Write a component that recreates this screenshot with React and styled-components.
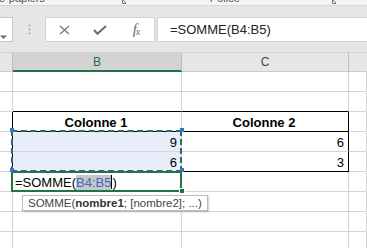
import React from 'react';
import styled, { createGlobalStyle } from 'styled-components';

const GlobalStyle = createGlobalStyle`
  html, body { margin: 0; padding: 0; background: #fff; }
  body { font-family: "Liberation Sans", Arial, sans-serif; overflow: hidden; }
`;

const COLS = '13px 169px 167px 1fr';

const Page = styled.div`
  width: 367px;
  height: 248px;
  overflow: hidden;
  display: flex;
  flex-direction: column;
  background: #fff;
`;

const RibbonEdge = styled.div`
  flex: none;
  height: 5px;
  overflow: hidden;
  display: flex;
  align-items: flex-start;
  background: #f4f4f4;
  border-bottom: 1px solid #d6d6d6;
`;

const RibbonLabel = styled.span`
  margin-top: -8px;
  margin-left: ${p => p.$left}px;
  font-size: 11px;
  line-height: 13px;
  color: #555;
  white-space: nowrap;
`;

const Launcher = styled.svg`
  flex: none;
  margin-left: ${p => p.$left}px;
`;

const FormulaArea = styled.div`
  flex: none;
  height: 46px;
  box-sizing: border-box;
  padding-top: 11px;
  display: flex;
  align-items: flex-start;
  background: #e6e6e6;
`;

const NameBox = styled.div`
  width: 13px;
  height: 25px;
  box-sizing: border-box;
  background: #fff;
  border: 1px solid #c6c6c6;
  border-left: none;
  padding-top: 8px;
`;

const Grip = styled.div`
  width: 32px;
  height: 25px;
  display: flex;
  align-items: center;
  justify-content: center;
`;

const ButtonBox = styled.div`
  width: 110px;
  height: 25px;
  box-sizing: border-box;
  background: #fff;
  border: 1px solid #d2d2d2;
  display: flex;
  align-items: center;
`;

const IconSlot = styled.div`
  width: 36px;
  display: flex;
  justify-content: center;
  align-items: center;
  color: #6a6a6a;
`;

const Fx = styled.span`
  font-family: "Liberation Serif", "Times New Roman", serif;
  font-style: italic;
  font-size: 15px;
  color: #6a6a6a;
  letter-spacing: -1px;
  sub { font-size: 10px; vertical-align: -1px; }
`;

const FormulaInput = styled.div`
  flex: 1;
  height: 25px;
  margin-left: 2px;
  box-sizing: border-box;
  background: #fff;
  border: 1px solid #d2d2d2;
  border-right: none;
  padding-left: 12px;
  display: flex;
  align-items: center;
  font-size: 13px;
  color: #222;
`;

const Sheet = styled.div`
  position: relative;
  flex: 1;
`;

const HeaderRow = styled.div`
  display: grid;
  grid-template-columns: ${COLS};
  border-top: 1px solid #d3d3d3;
`;

const HeaderCell = styled.div`
  height: 19px;
  box-sizing: border-box;
  display: flex;
  align-items: center;
  justify-content: center;
  font-size: 12px;
  background: ${p => (p.$active ? '#d3d3d3' : '#e6e6e6')};
  color: ${p => (p.$active ? '#1d6b40' : '#444')};
  border-right: 1px solid ${p => (p.$last ? 'transparent' : '#bdbdbd')};
  border-bottom: ${p => (p.$active ? '2px solid #217346' : '1px solid #c9c9c9')};
`;

const Grid = styled.div`
  display: grid;
  grid-template-columns: ${COLS};
  grid-auto-rows: 20px;
`;

const Cell = styled.div`
  box-sizing: border-box;
  display: flex;
  align-items: flex-end;
  justify-content: ${p => p.$align || 'flex-start'};
  padding: 0 4px 1px 2px;
  font-size: 13px;
  line-height: 15px;
  font-weight: ${p => (p.$bold ? 700 : 400)};
  color: #000;
  white-space: nowrap;
  overflow: visible;
  background: ${p => (p.$sel ? '#e8eef9' : '#fff')};
  border-right: 1px solid ${p => (p.$r ? '#000' : '#d4d4d4')};
  border-bottom: 1px solid ${p => (p.$b ? '#000' : '#d4d4d4')};
`;

const Ref = styled.span`
  color: #3a68c2;
  background: #c8c8c8;
`;

const Caret = styled.span`
  display: inline-block;
  width: 1px;
  height: 14px;
  background: #000;
  vertical-align: -2px;
`;

const ActiveFrame = styled.div`
  position: absolute;
  left: 11px;
  top: 119px;
  width: 171px;
  height: 21px;
  box-sizing: border-box;
  border: 2px solid #217346;
  pointer-events: none;
`;

const RangeFrame = styled.div`
  position: absolute;
  left: 11px;
  top: 78px;
  width: 171px;
  height: 42px;
  box-sizing: border-box;
  border: 2px dashed #2b6d5f;
  pointer-events: none;
`;

const Handle = styled.div`
  position: absolute;
  left: ${p => p.$x - 2}px;
  top: ${p => p.$y - 2}px;
  width: 4px;
  height: 4px;
  background: ${p => p.$color || '#3b6fca'};
  box-shadow: ${p => (p.$ring ? '0 0 0 1px #fff' : 'none')};
`;

const Tooltip = styled.div`
  position: absolute;
  left: 22px;
  top: 143px;
  height: 16px;
  box-sizing: border-box;
  padding: 0 5px;
  display: flex;
  align-items: center;
  background: #fff;
  border: 1px solid #bcbcbc;
  box-shadow: 1px 1px 2px rgba(0, 0, 0, 0.2);
  font-size: 11.5px;
  color: #444;
  white-space: nowrap;
  b { color: #333; }
`;

const rows = [
  [{}, {}, {}, {}],
  [{}, { b: true }, { b: true }, {}],
  [{ r: true }, { text: 'Colonne 1', bold: true, align: 'center', b: true }, { text: 'Colonne 2', bold: true, align: 'center', b: true, r: true }, {}],
  [{ r: true }, { text: '9', align: 'flex-end', sel: true }, { text: '6', align: 'flex-end', r: true }, {}],
  [{ r: true }, { text: '6', align: 'flex-end', sel: true, b: true }, { text: '3', align: 'flex-end', r: true, b: true }, {}],
  [{}, { formula: true }, {}, {}],
  [{}, {}, {}, {}],
  [{}, {}, {}, {}],
  [{}, {}, {}, {}],
];

const App = () => {
  return (
    <Page>
      <GlobalStyle />
      <RibbonEdge>
        <RibbonLabel $left={-1}>e-papiers</RibbonLabel>
        <Launcher $left={77} width="4" height="4" viewBox="0 0 4 4">
          <path d="M0.5 0v3.5H4M1 0l3 3" stroke="#777" fill="none" strokeWidth="1" />
        </Launcher>
        <RibbonLabel $left={84}>Police</RibbonLabel>
        <Launcher $left={92} width="4" height="4" viewBox="0 0 4 4">
          <path d="M0.5 0v3.5H4M1 0l3 3" stroke="#777" fill="none" strokeWidth="1" />
        </Launcher>
      </RibbonEdge>

      <FormulaArea>
        <NameBox>
          <svg width="8" height="5" viewBox="0 0 8 5">
            <path d="M0 0.5h7L3.5 4z" fill="#6d6d6d" />
          </svg>
        </NameBox>
        <Grip>
          <svg width="3" height="11" viewBox="0 0 3 11">
            <circle cx="1.5" cy="1.5" r="1" fill="#a6a6a6" />
            <circle cx="1.5" cy="5.5" r="1" fill="#a6a6a6" />
            <circle cx="1.5" cy="9.5" r="1" fill="#a6a6a6" />
          </svg>
        </Grip>
        <ButtonBox>
          <IconSlot>
            <svg width="11" height="10" viewBox="0 0 11 10">
              <path d="M1 1l9 8M10 1l-9 8" stroke="#7a7a7a" strokeWidth="1.4" fill="none" />
            </svg>
          </IconSlot>
          <IconSlot>
            <svg width="14" height="10" viewBox="0 0 14 10">
              <path d="M1 5l3.5 3.8L13 1" stroke="#6a6a6a" strokeWidth="2" fill="none" />
            </svg>
          </IconSlot>
          <IconSlot>
            <Fx>f<sub>x</sub></Fx>
          </IconSlot>
        </ButtonBox>
        <FormulaInput>=SOMME(B4:B5)</FormulaInput>
      </FormulaArea>

      <Sheet>
        <HeaderRow>
          <HeaderCell />
          <HeaderCell $active>B</HeaderCell>
          <HeaderCell>C</HeaderCell>
          <HeaderCell $last />
        </HeaderRow>
        <Grid>
          {rows.map((row, i) =>
            row.map((c, j) => (
              <Cell
                key={`${i}-${j}`}
                $r={c.r}
                $b={c.b}
                $bold={c.bold}
                $align={c.align}
                $sel={c.sel}
              >
                {c.formula ? (
                  <span>
                    =SOMME(<Ref>B4:B5</Ref><Caret />)
                  </span>
                ) : (
                  c.text
                )}
              </Cell>
            ))
          )}
        </Grid>

        <ActiveFrame />
        <RangeFrame />
        <Handle $x={12} $y={78} />
        <Handle $x={182} $y={78} />
        <Handle $x={12} $y={118} />
        <Handle $x={182} $y={118} />
        <Handle $x={182} $y={139} $color="#217346" $ring />

        <Tooltip>
          SOMME(<b>nombre1</b>; [nombre2]; ...)
        </Tooltip>
      </Sheet>
    </Page>
  );
};

export default App;
